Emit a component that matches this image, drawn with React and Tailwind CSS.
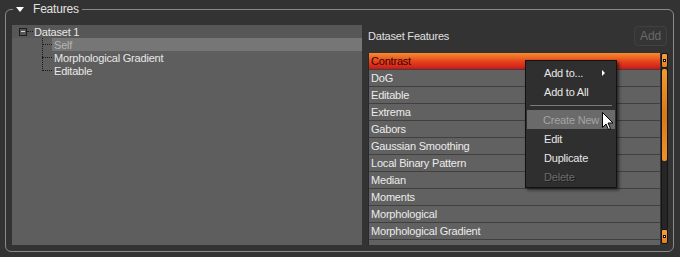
import React from 'react';

const features = [
  'Contrast',
  'DoG',
  'Editable',
  'Extrema',
  'Gabors',
  'Gaussian Smoothing',
  'Local Binary Pattern',
  'Median',
  'Moments',
  'Morphological',
  'Morphological Gradient',
  '',
];

function ScrollButton() {
  return (
    <div className="h-[15px] rounded-[2px] border border-[#151515] bg-gradient-to-b from-[#f7a03a] to-[#e6801a] flex items-center justify-center">
      <div className="w-[3px] h-[3px] bg-[#111] flex items-center justify-center">
        <div className="w-[1px] h-[1px] bg-white" />
      </div>
    </div>
  );
}

function Cursor() {
  return (
    <svg className="absolute left-[602px] top-[112px]" width="12" height="19" viewBox="0 0 12 19">
      <path d="M0.5 0.5 L0.5 15.5 L4 12 L6.5 17.5 L8.5 16.5 L6 11 L11 11 Z" fill="#fff" stroke="#000" strokeWidth="1" />
    </svg>
  );
}

export default function App() {
  return (
    <div className="relative w-[680px] h-[257px] bg-[#333333] pt-0 font-['Liberation_Sans',Arial,sans-serif] text-[11px] leading-none tracking-[-0.2px] overflow-hidden">
      <fieldset className="ml-[5px] w-[669px] h-[252px] rounded-[6px] border border-[#8a8a8a] p-0 m-0">
        <legend className="ml-[7px] px-[3px] h-[18px]">
          <span className="inline-flex items-center h-[18px] gap-[9px]">
            <span className="w-0 h-0 border-l-[4.5px] border-r-[4.5px] border-t-[5px] border-l-transparent border-r-transparent border-t-white" />
            <span className="text-[12px] text-[#e2e2e2]">Features</span>
          </span>
        </legend>

        <div className="mt-[7px] pl-[6px] flex gap-[6px]">
          {/* tree panel */}
          <div className="w-[350px] h-[220px] bg-[#5e5e5e] text-[#e8e8e8]">
            <div className="h-[13px] bg-[#575757] flex items-center relative">
              <div className="ml-[7px] w-[8px] h-[8px] border border-[#1c1c1c] flex items-center justify-center">
                <div className="w-[4px] h-[1px] bg-[#d8d8d8]" />
              </div>
              <div className="w-[6px] border-t border-dotted border-[#1a1a1a]" />
              <span className="ml-[1px] pt-[1px]">Dataset 1</span>
            </div>
            <div className="relative ml-[30px]">
              <div className="absolute left-0 top-0 h-[33px] border-l border-dotted border-[#1a1a1a]" />
              {['Self', 'Morphological Gradient', 'Editable'].map((name, i) => (
                <div key={name} className="h-[13px] flex items-center">
                  <div className="w-[10px] border-t border-dotted border-[#1a1a1a]" />
                  <span
                    className={
                      i === 0
                        ? 'flex-1 h-[13px] flex items-center pl-[2px] pt-[1px] bg-[#767676] text-[#b4b4b4]'
                        : 'pl-[2px] pt-[1px]'
                    }
                  >
                    {name}
                  </span>
                </div>
              ))}
            </div>
          </div>

          {/* dataset features */}
          <div className="w-[300px] flex flex-col">
            <div className="h-[21px] flex items-center justify-between">
              <span className="text-[#e0e0e0] pt-[1px]">Dataset Features</span>
              <button className="mr-[1px] w-[33px] h-[20px] rounded-[4px] border border-[#414141] bg-[#353535] text-[12px] text-[#6a6a6a]">
                Add
              </button>
            </div>
            <div className="mt-[7px] h-[192px] flex">
              <div className="w-[292px] border-l border-[#2a2a2a] bg-[#616161] overflow-hidden">
                {features.map((f, i) => (
                  <div
                    key={i}
                    className={
                      i === 0
                        ? 'h-[17px] flex items-center pl-[2px] pt-[1px] bg-gradient-to-b from-[#f68c2e] via-[#e6451e] to-[#cc1418] text-[#3a0000] border-b border-[#404040]'
                        : 'h-[17px] flex items-center pl-[2px] pt-[1px] text-[#ececec] border-b border-[#404040]'
                    }
                  >
                    {f}
                  </div>
                ))}
              </div>
              <div className="ml-[1px] w-[7px] flex flex-col">
                <ScrollButton />
                <div className="h-[161px] bg-[#262626] border-x border-[#151515] pt-[1px]">
                  <div className="h-[92px] rounded-[2px] bg-gradient-to-b from-[#f39a2c] via-[#d9791a] to-[#f0922a]" />
                </div>
                <ScrollButton />
              </div>
            </div>
          </div>
        </div>
      </fieldset>

      {/* context menu */}
      <div className="absolute left-[525px] top-[60px] w-[92px] h-[128px] bg-[#2f2f2f] border border-[#121212] shadow-[2px_2px_3px_rgba(0,0,0,0.6)] pt-[2px] px-[1px] text-[#e8e8e8]">
        <div className="h-[19px] flex items-center pl-[17px] pt-[1px] relative">
          Add to...
          <span className="absolute left-[75px] top-[7px] w-0 h-0 border-t-[3px] border-b-[3px] border-l-[3px] border-t-transparent border-b-transparent border-l-white" />
        </div>
        <div className="h-[19px] flex items-center pl-[17px] pt-[1px]">Add to All</div>
        <div className="h-[9px] flex items-center px-[3px]">
          <div className="w-full h-[1px] bg-[#7a7a7a]" />
        </div>
        <div className="h-[19px] flex items-center pl-[16px] pt-[1px] bg-[#6a6a6a] text-[#a4a4a4]">Create New</div>
        <div className="h-[19px] flex items-center pl-[17px] pt-[1px]">Edit</div>
        <div className="h-[19px] flex items-center pl-[17px] pt-[1px]">Duplicate</div>
        <div className="h-[19px] flex items-center pl-[17px] pt-[1px] text-[#6c6c6c] [text-shadow:1px_1px_0_#1e1e1e]">Delete</div>
      </div>

      <Cursor />
    </div>
  );
}
